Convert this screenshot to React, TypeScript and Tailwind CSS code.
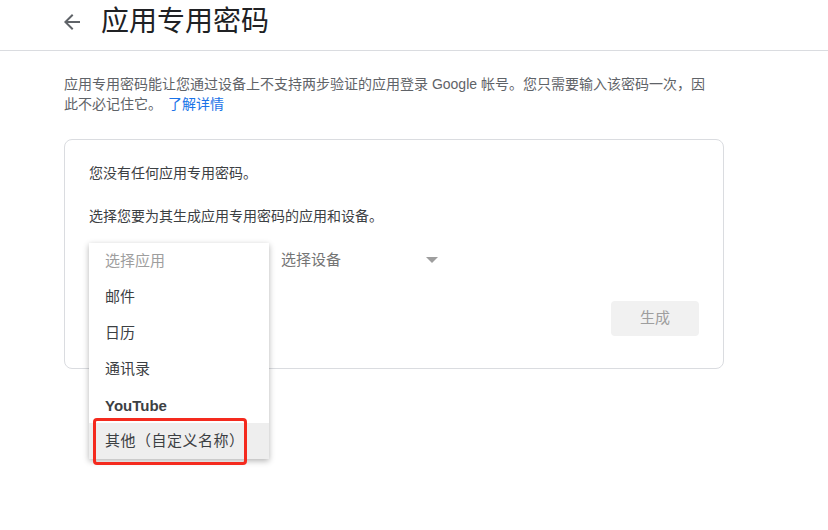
export default function App() {
  const items = ["邮件", "日历", "通讯录"];
  return (
    <div
      className="w-[828px] h-[530px] bg-white overflow-hidden"
      style={{ fontFamily: '"Liberation Sans", "Noto Sans CJK SC", sans-serif' }}
    >
      {/* header */}
      <div className="h-[51px] border-b border-[#dadce0] flex items-center pl-[60px] pb-[6px]">
        <svg width="24" height="24" viewBox="0 0 24 24" className="text-[#5f6368]">
          <path d="M20 11H7.83l5.59-5.59L12 4l-8 8 8 8 1.41-1.41L7.83 13H20v-2z" fill="currentColor" />
        </svg>
        <h1 className="ml-[17px] text-[28px] leading-none text-[#202124]">应用专用密码</h1>
      </div>

      <div className="pl-[64px] w-[724px]">
        <p className="mt-[23px] text-[14px] leading-[20px] text-[#5f6368] pr-[6px]">
          应用专用密码能让您通过设备上不支持两步验证的应用登录 Google 帐号。您只需要输入该密码一次，因此不必记住它。
          <a className="text-[#1a73e8] ml-[6px]">了解详情</a>
        </p>

        <div className="relative mt-[25px] h-[230px] border border-[#dadce0] rounded-[8px] px-[24px] pt-[23px]">
          <p className="text-[14px] leading-[20px] text-[#3c4043]">您没有任何应用专用密码。</p>
          <p className="mt-[23px] text-[14px] leading-[20px] text-[#3c4043]">选择您要为其生成应用专用密码的应用和设备。</p>

          <div className="mt-[16px] flex items-center h-[36px]">
            <div className="w-[180px]" />
            <div className="ml-[12px] w-[157px] flex items-center justify-between text-[15px] text-[#757575]">
              <span>选择设备</span>
              <span className="w-0 h-0 border-l-[6px] border-r-[6px] border-t-[6px] border-l-transparent border-r-transparent border-t-[#9e9e9e]" />
            </div>
          </div>

          <div className="flex justify-end mt-[23px]">
            <button className="w-[88px] h-[35px] rounded-[4px] bg-[#f1f1f1] text-[15px] text-[#9e9e9e]">
              生成
            </button>
          </div>

          {/* dropdown */}
          <div className="absolute left-[24px] top-[103px] w-[180px] bg-white shadow-[0_2px_6px_rgba(0,0,0,0.3)] text-[15px]">
            <div className="h-[36px] flex items-center px-[16px] text-[#9e9e9e]">选择应用</div>
            {items.map((t) => (
              <div key={t} className="h-[36px] flex items-center px-[16px] text-[#3c4043]">
                {t}
              </div>
            ))}
            <div className="h-[36px] flex items-center px-[16px] pt-[2px] text-[#3c4043] font-bold">YouTube</div>
            <div className="relative h-[36px] flex items-center px-[16px] text-[#3c4043] bg-[#eeeeee] tracking-[0.5px]">
              其他（自定义名称）
              <div className="absolute left-[4px] top-[-5px] w-[154px] h-[47px] border-[3px] border-[#f42a1e] rounded-[4px]" />
            </div>
          </div>
        </div>
      </div>
    </div>
  );
}
